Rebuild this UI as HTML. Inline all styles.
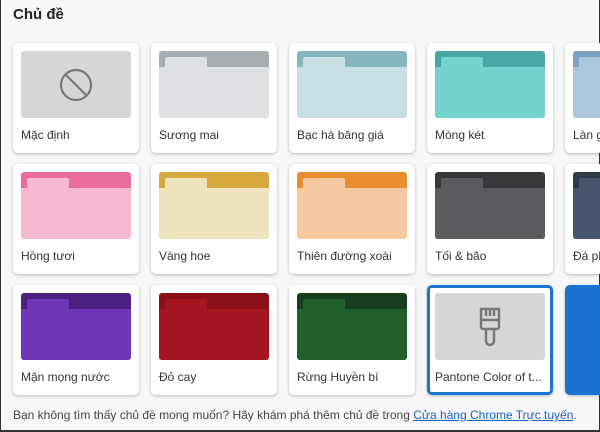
<!DOCTYPE html>
<html><head><meta charset="utf-8"><style>
*{margin:0;padding:0;box-sizing:border-box}
body{width:600px;height:432px;overflow:hidden;background:#f7f7f7;font-family:"Liberation Sans",sans-serif;position:relative;border-left:1px solid #333;border-right:1px solid #333;border-bottom:2px solid #333}
.t{position:absolute;left:12px;top:6px;font-size:15px;color:#222;font-weight:bold}
.c{position:absolute;width:126px;height:110px;background:#fff;border-radius:5px;box-shadow:0 1px 3px rgba(0,0,0,.25)}
.im{position:absolute;left:8px;top:8px;width:110px;height:67px;border-radius:3px;overflow:hidden}
.tab{position:absolute;left:6px;top:6px;width:42px;height:12px;border-radius:2px 2px 0 0}
.bd{position:absolute;left:0;right:0;top:16px;bottom:0}
.l{position:absolute;left:8px;top:85px;font-size:12px;color:#333;white-space:nowrap}
.f{position:absolute;left:12px;top:408px;font-size:12px;color:#444;white-space:nowrap}
.f a{color:#1a63c4;text-decoration:underline}
</style></head><body>
<div class="t">Chủ đề</div>

<div class="c" style="left:12px;top:43px"><div class="im" style="background:#d6d6d6"><svg width="110" height="67"><circle cx="55" cy="34" r="15" fill="none" stroke="#777" stroke-width="2.2"/><line x1="45" y1="24" x2="65" y2="44" stroke="#777" stroke-width="2.2"/></svg></div><div class="l">Mặc định</div></div>

<div class="c" style="left:150px;top:43px"><div class="im" style="background:#a8adb2"><div class="tab" style="background:#dfe0e3"></div><div class="bd" style="background:#dfe0e3"></div></div><div class="l">Sương mai</div></div>
<div class="c" style="left:288px;top:43px"><div class="im" style="background:#87b5bf"><div class="tab" style="background:#c7e0e4"></div><div class="bd" style="background:#c7e0e4"></div></div><div class="l">Bạc hà băng giá</div></div>
<div class="c" style="left:426px;top:43px"><div class="im" style="background:#48a6a6"><div class="tab" style="background:#74d2cf"></div><div class="bd" style="background:#74d2cf"></div></div><div class="l">Mòng két</div></div>
<div class="c" style="left:564px;top:43px"><div class="im" style="background:#7ea2c2"><div class="tab" style="background:#abc6dd"></div><div class="bd" style="background:#abc6dd"></div></div><div class="l">Làn gió</div></div>

<div class="c" style="left:12px;top:164px"><div class="im" style="background:#e96c9c"><div class="tab" style="background:#f7b9d2"></div><div class="bd" style="background:#f7b9d2"></div></div><div class="l">Hồng tươi</div></div>
<div class="c" style="left:150px;top:164px"><div class="im" style="background:#d5a93b"><div class="tab" style="background:#efe3bd"></div><div class="bd" style="background:#efe3bd"></div></div><div class="l">Vàng hoe</div></div>
<div class="c" style="left:288px;top:164px"><div class="im" style="background:#e88e30"><div class="tab" style="background:#f4c9a0"></div><div class="bd" style="background:#f4c9a0"></div></div><div class="l">Thiên đường xoài</div></div>
<div class="c" style="left:426px;top:164px"><div class="im" style="background:#38383b"><div class="tab" style="background:#5b5b5f"></div><div class="bd" style="background:#5b5b5f"></div></div><div class="l">Tối &amp; bão</div></div>
<div class="c" style="left:564px;top:164px"><div class="im" style="background:#2e3a4c"><div class="tab" style="background:#46566f"></div><div class="bd" style="background:#46566f"></div></div><div class="l">Đá phiến</div></div>

<div class="c" style="left:12px;top:285px"><div class="im" style="background:#4b2080"><div class="tab" style="background:#6e35b8"></div><div class="bd" style="background:#6e35b8"></div></div><div class="l">Mận mọng nước</div></div>
<div class="c" style="left:150px;top:285px"><div class="im" style="background:#8a0f18"><div class="tab" style="background:#a4161f"></div><div class="bd" style="background:#a4161f"></div></div><div class="l">Đỏ cay</div></div>
<div class="c" style="left:288px;top:285px"><div class="im" style="background:#173f1f"><div class="tab" style="background:#225f2d"></div><div class="bd" style="background:#225f2d"></div></div><div class="l">Rừng Huyền bí</div></div>
<div class="c" style="left:426px;top:285px;border:3px solid #1a73d0"><div class="im" style="left:5px;top:5px;background:#d6d6d6"><svg width="110" height="67"><path d="M46 16h18v18a2 2 0 0 1-2 2h-14a2 2 0 0 1-2-2z M46 27h18 M51 16v7 M55 16v7 M59 16v7 M51 36v12a4 4 0 0 0 8 0v-12" fill="none" stroke="#777" stroke-width="2.4" stroke-linejoin="round"/></svg></div><div class="l" style="left:5px;top:82px">Pantone Color of t...</div></div>
<div class="c" style="left:564px;top:285px;background:#1a73d0"></div>

<div class="f">Bạn không tìm thấy chủ đề mong muốn? Hãy khám phá thêm chủ đề trong <a>Cửa hàng Chrome Trực tuyến</a>.</div>
</body></html>
